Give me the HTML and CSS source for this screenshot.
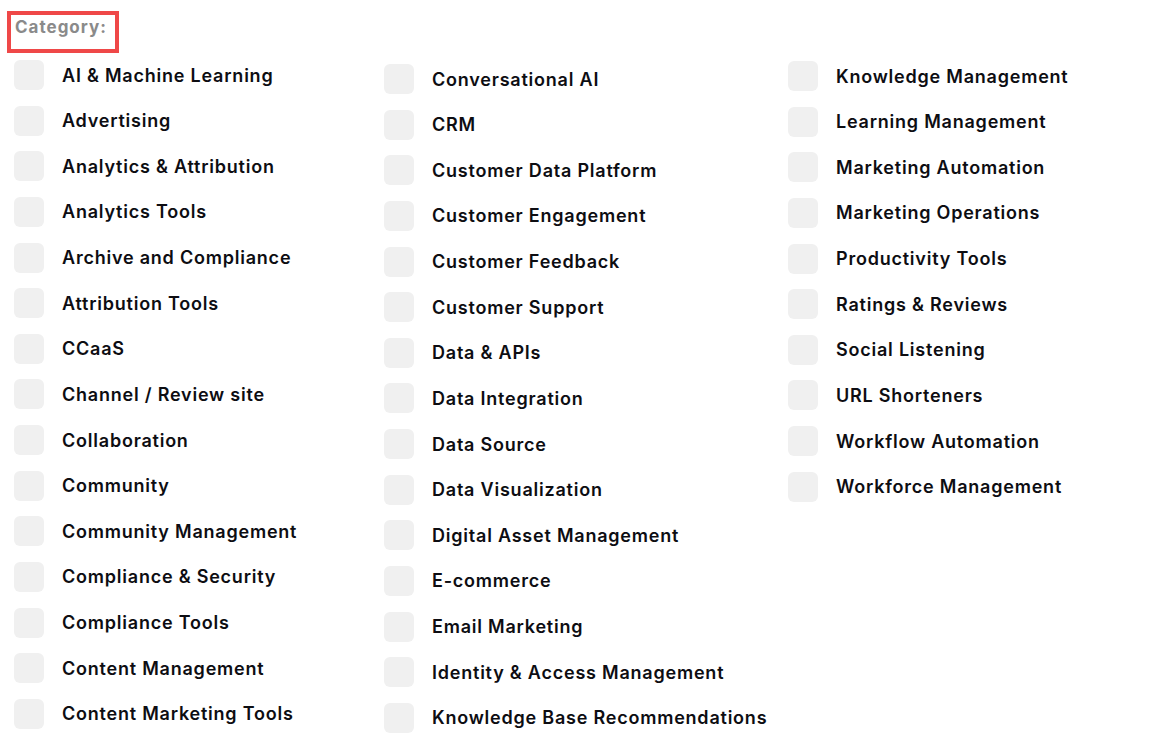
FILE: index.html
```html
<!DOCTYPE html>
<html lang="en">
<head>
<meta charset="utf-8">
<title>Category</title>
<link rel="stylesheet" href="styles.css">
</head>
<body>
<div class="filter">
  <div class="label">Category:</div>
  <div class="grid">
    <ul class="col col-1">
      <li class="item"><span class="box"></span><span class="text">AI &amp; Machine Learning</span></li>
      <li class="item"><span class="box"></span><span class="text">Advertising</span></li>
      <li class="item"><span class="box"></span><span class="text">Analytics &amp; Attribution</span></li>
      <li class="item"><span class="box"></span><span class="text">Analytics Tools</span></li>
      <li class="item"><span class="box"></span><span class="text">Archive and Compliance</span></li>
      <li class="item"><span class="box"></span><span class="text">Attribution Tools</span></li>
      <li class="item"><span class="box"></span><span class="text">CCaaS</span></li>
      <li class="item"><span class="box"></span><span class="text">Channel / Review site</span></li>
      <li class="item"><span class="box"></span><span class="text">Collaboration</span></li>
      <li class="item"><span class="box"></span><span class="text">Community</span></li>
      <li class="item"><span class="box"></span><span class="text">Community Management</span></li>
      <li class="item"><span class="box"></span><span class="text">Compliance &amp; Security</span></li>
      <li class="item"><span class="box"></span><span class="text">Compliance Tools</span></li>
      <li class="item"><span class="box"></span><span class="text">Content Management</span></li>
      <li class="item"><span class="box"></span><span class="text">Content Marketing Tools</span></li>
    </ul>
    <ul class="col col-2">
      <li class="item"><span class="box"></span><span class="text">Conversational AI</span></li>
      <li class="item"><span class="box"></span><span class="text">CRM</span></li>
      <li class="item"><span class="box"></span><span class="text">Customer Data Platform</span></li>
      <li class="item"><span class="box"></span><span class="text">Customer Engagement</span></li>
      <li class="item"><span class="box"></span><span class="text">Customer Feedback</span></li>
      <li class="item"><span class="box"></span><span class="text">Customer Support</span></li>
      <li class="item"><span class="box"></span><span class="text">Data &amp; APIs</span></li>
      <li class="item"><span class="box"></span><span class="text">Data Integration</span></li>
      <li class="item"><span class="box"></span><span class="text">Data Source</span></li>
      <li class="item"><span class="box"></span><span class="text">Data Visualization</span></li>
      <li class="item"><span class="box"></span><span class="text">Digital Asset Management</span></li>
      <li class="item"><span class="box"></span><span class="text">E-commerce</span></li>
      <li class="item"><span class="box"></span><span class="text">Email Marketing</span></li>
      <li class="item"><span class="box"></span><span class="text">Identity &amp; Access Management</span></li>
      <li class="item"><span class="box"></span><span class="text">Knowledge Base Recommendations</span></li>
    </ul>
    <ul class="col col-3">
      <li class="item"><span class="box"></span><span class="text">Knowledge Management</span></li>
      <li class="item"><span class="box"></span><span class="text">Learning Management</span></li>
      <li class="item"><span class="box"></span><span class="text">Marketing Automation</span></li>
      <li class="item"><span class="box"></span><span class="text">Marketing Operations</span></li>
      <li class="item"><span class="box"></span><span class="text">Productivity Tools</span></li>
      <li class="item"><span class="box"></span><span class="text">Ratings &amp; Reviews</span></li>
      <li class="item"><span class="box"></span><span class="text">Social Listening</span></li>
      <li class="item"><span class="box"></span><span class="text">URL Shorteners</span></li>
      <li class="item"><span class="box"></span><span class="text">Workflow Automation</span></li>
      <li class="item"><span class="box"></span><span class="text">Workforce Management</span></li>
    </ul>
  </div>
</div>
</body>
</html>
```

FILE: styles.css
```css
* { box-sizing: border-box; }

html, body {
  margin: 0;
  padding: 0;
  background: #ffffff;
}

body {
  font-family: "Inter", "Liberation Sans", sans-serif;
  color: #111111;
  overflow: hidden;
}

.filter {
  padding: 11px 0 0 7px;
}

.label {
  width: 112px;
  height: 42px;
  border: 4px solid #ef4848;
  padding: 0 0 0 4px;
  font-size: 17px;
  font-weight: 700;
  line-height: 24px;
  letter-spacing: 1px;
  color: #8a8a8a;
}

.grid {
  display: grid;
  grid-template-columns: 370px 404px 1fr;
  padding-left: 7px;
}

.col {
  list-style: none;
  margin: 0;
  padding: 0;
  display: flex;
  flex-direction: column;
  gap: 15.64px;
}

.col-1 { padding-top: 7px; }
.col-2 { padding-top: 11px; }
.col-3 { padding-top: 8px; }

.item {
  display: flex;
  align-items: center;
  gap: 18px;
  height: 30px;
}

.box {
  flex: none;
  width: 30px;
  height: 30px;
  border-radius: 6px;
  background: #f0f0f0;
}

.text {
  font-size: 18px;
  font-weight: 600;
  letter-spacing: 0.78px;
  white-space: nowrap;
  color: #0d0d12;
}
```
